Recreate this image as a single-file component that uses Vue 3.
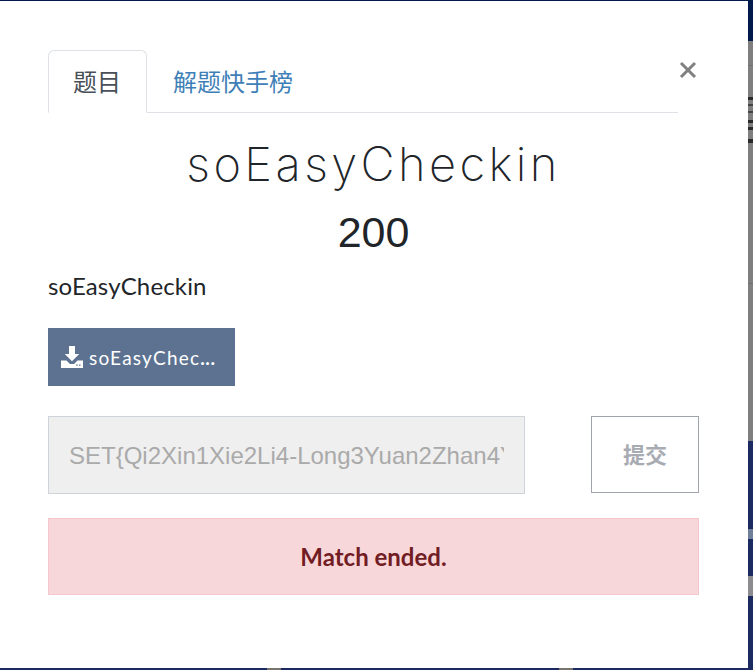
<script setup>
const tabs = [
  { label: '题目', active: true },
  { label: '解题快手榜', active: false },
]
const flag = 'SET{Qi2Xin1Xie2Li4-Long3Yuan2Zhan4Yun}'
const marks = [
  { top: '65px', height: '1px', background: '#6f6f6f' },
  { top: '97px', height: '3px', background: '#2a2a2a' },
  { top: '104px', height: '2px', background: '#444' },
  { top: '111px', height: '2px', background: '#444' },
  { top: '120px', height: '3px', background: '#2a2a2a' },
  { top: '127px', height: '3px', background: '#2a2a2a' },
  { top: '139px', height: '4px', background: '#2a2a2a' },
  { top: '283px', height: '1px', background: '#6f6f6f' },
  { top: '529px', height: '10px', background: '#6f7f99' },
  { top: '576px', height: '20px', background: '#8b8b90' },
]
</script>

<template>
  <div class="page">
    <span v-for="(m, i) in marks" :key="i" class="mark" :style="{ top: m.top, height: m.height, background: m.background }"></span>
    <span class="peek peek-a"></span>
    <span class="peek peek-b"></span>
    <div class="modal">
      <div class="head">
        <ul class="tabs">
          <li v-for="t in tabs" :key="t.label" class="tab" :class="{ active: t.active }">{{ t.label }}</li>
        </ul>
        <button class="close" aria-label="Close">
          <svg width="18" height="18" viewBox="0 0 18 18">
            <path d="M2 2 L16 16 M16 2 L2 16" stroke="#808080" stroke-width="3" fill="none" />
          </svg>
        </button>
      </div>
      <h3 class="title">soEasyCheckin</h3>
      <h4 class="score">200</h4>
      <p class="desc">soEasyCheckin</p>
      <a class="file">
        <svg class="dl" width="22" height="22" viewBox="0 0 22 22">
          <path fill="#fff" d="M8 0h6v8h4.2L11 15.2 3.8 8H8z" />
          <path fill="#fff" fill-rule="evenodd" d="M0 14.5h5.5L9 18h4l3.500-3.500H22V22H0z M15.200 18.500h1.500v1.300h-1.500z M18 18.500h1.500v1.300H18z" />
        </svg>
        <span class="fname">soEasyChec<b>...</b></span>
      </a>
      <div class="answer">
        <input class="flag" :value="flag" disabled />
        <button class="submit" disabled>提交</button>
      </div>
      <div class="alert">Match ended.</div>
    </div>
  </div>
</template>

<style scoped>
.page {
  position: relative;
  width: 753px;
  height: 670px;
  overflow: hidden;
  padding-top: 1px;
  box-sizing: border-box;
  background: linear-gradient(
    to bottom,
    #001a4b 0,
    #001a4b 41px,
    #7f7f7f 41px,
    #7f7f7f 441px,
    #1b2a60 441px,
    #1b2a60 100%
  );
}
.mark {
  position: absolute;
  right: 0;
  width: 5px;
}
.peek {
  position: absolute;
  bottom: 0;
  width: 14px;
  height: 2px;
  background: #77746f;
}
.peek-a { left: 267px; }
.peek-b { left: 559px; }
.modal {
  width: 748px;
  height: 667px;
  box-sizing: border-box;
  background: #fff;
  padding: 49px 49px 0 48px;
  font-family: Lato, "Noto Sans CJK SC", sans-serif;
  color: #212529;
}
.head {
  display: flex;
  align-items: flex-start;
}
.tabs {
  flex: 0 0 630px;
  display: flex;
  margin: 0;
  padding: 0;
  list-style: none;
  border-bottom: 1px solid #dee2e6;
  height: 63px;
  box-sizing: border-box;
}
.tab {
  height: 63px;
  box-sizing: border-box;
  padding: 14px 25px 0;
  font-size: 24px;
  line-height: 34px;
  color: #3f7fb8;
  border: 1px solid transparent;
}
.tab.active {
  padding-left: 24px;
  color: #495057;
  background: #fff;
  border-color: #dee2e6 #dee2e6 #fff;
  border-radius: 6px 6px 0 0;
}
.close {
  flex: none;
  margin: 11px 0 0 1px;
  padding: 0;
  border: 0;
  background: none;
  width: 18px;
  height: 18px;
  display: block;
}
.close svg { display: block; }
.title {
  margin: 23px 0 0;
  text-align: center;
  font-family: Inter, sans-serif;
  font-weight: 250;
  font-size: 47px;
  letter-spacing: 3.4px;
  line-height: 56px;
}
.score {
  margin: 16px 0 0;
  text-align: center;
  font-family: "Liberation Sans", sans-serif;
  font-weight: 400;
  font-size: 43px;
  line-height: 48px;
}
.desc {
  margin: 12px 0 0;
  font-size: 24px;
  line-height: 36px;
  letter-spacing: 0.15px;
}
.file {
  margin-top: 24px;
  width: 187px;
  height: 58px;
  background: #5c7290;
  color: #fff;
  display: flex;
  align-items: center;
  padding-left: 13px;
  box-sizing: border-box;
  font-size: 19px;
  letter-spacing: 1.2px;
}
.dl { flex: none; margin-right: 6px; }
.fname { white-space: nowrap; }
.fname b { font-weight: 700; letter-spacing: 0.6px; }
.answer {
  margin-top: 30px;
  display: flex;
  justify-content: space-between;
  align-items: flex-start;
}
.flag {
  width: 477px;
  height: 78px;
  box-sizing: border-box;
  padding: 2px 20px 0;
  background: #efefef;
  border: 1px solid #ced4da;
  border-radius: 0;
  font-family: "Liberation Sans", sans-serif;
  font-size: 24px;
  color: #aaa;
  -webkit-text-fill-color: #aaa;
  opacity: 1;
}
.submit {
  width: 108px;
  height: 77px;
  box-sizing: border-box;
  padding: 0 0 3px;
  background: #fff;
  border: 1px solid #9fa4ad;
  border-radius: 0;
  font-family: Lato, "Noto Sans CJK SC", sans-serif;
  font-weight: 700;
  font-size: 22px;
  color: #a8acb2;
}
.alert {
  margin-top: 24px;
  height: 77px;
  box-sizing: border-box;
  background: #f8d7da;
  border: 1px solid #f5c6cb;
  color: #721c24;
  display: flex;
  align-items: center;
  justify-content: center;
  font-weight: 700;
  font-size: 24px;
}
</style>
